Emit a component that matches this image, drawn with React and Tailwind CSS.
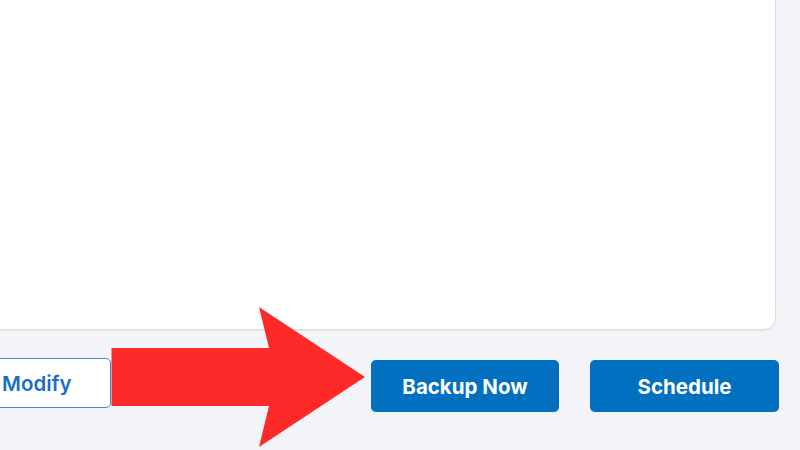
import React from "react";

export default function App() {
  return (
    <div
      className="relative w-[800px] h-[450px] overflow-hidden bg-[#f3f4f8]"
      style={{ fontFamily: "Inter, 'Noto Sans', sans-serif" }}
    >
      <div className="flex flex-col">
        <div className="-ml-[24px] -mt-[14px] w-[800px] h-[344px] rounded-[12px] border border-[#dcdde2] bg-white shadow-[0_1px_2px_rgba(0,0,0,0.06)]" />
        <div className="-ml-[77px] mt-[28px] flex items-start">
          <button className="h-[50px] w-[188px] rounded-[5px] border-[1.5px] border-[#3a8ad2] bg-white pl-[78px] pt-[3px] text-left text-[20.5px] font-semibold text-[#1b6fbf]">
            Modify
          </button>
          <button className="ml-[260px] mt-[2px] h-[52px] w-[188px] rounded-[5px] bg-[#0170c0] pt-[3px] text-[20.5px] font-bold text-white">
            Backup Now
          </button>
          <button className="ml-[31px] mt-[2px] h-[52px] w-[189px] rounded-[5px] bg-[#0170c0] pt-[3px] text-[20.5px] font-bold text-white">
            Schedule
          </button>
        </div>
      </div>
      <svg
        className="absolute left-0 top-0 pointer-events-none"
        width="800"
        height="450"
        viewBox="0 0 800 450"
      >
        <polygon
          points="111.5,348 269,348 259,307 365,377 259,447 269,406 111.5,406"
          fill="#fe2a2a"
        />
      </svg>
    </div>
  );
}
